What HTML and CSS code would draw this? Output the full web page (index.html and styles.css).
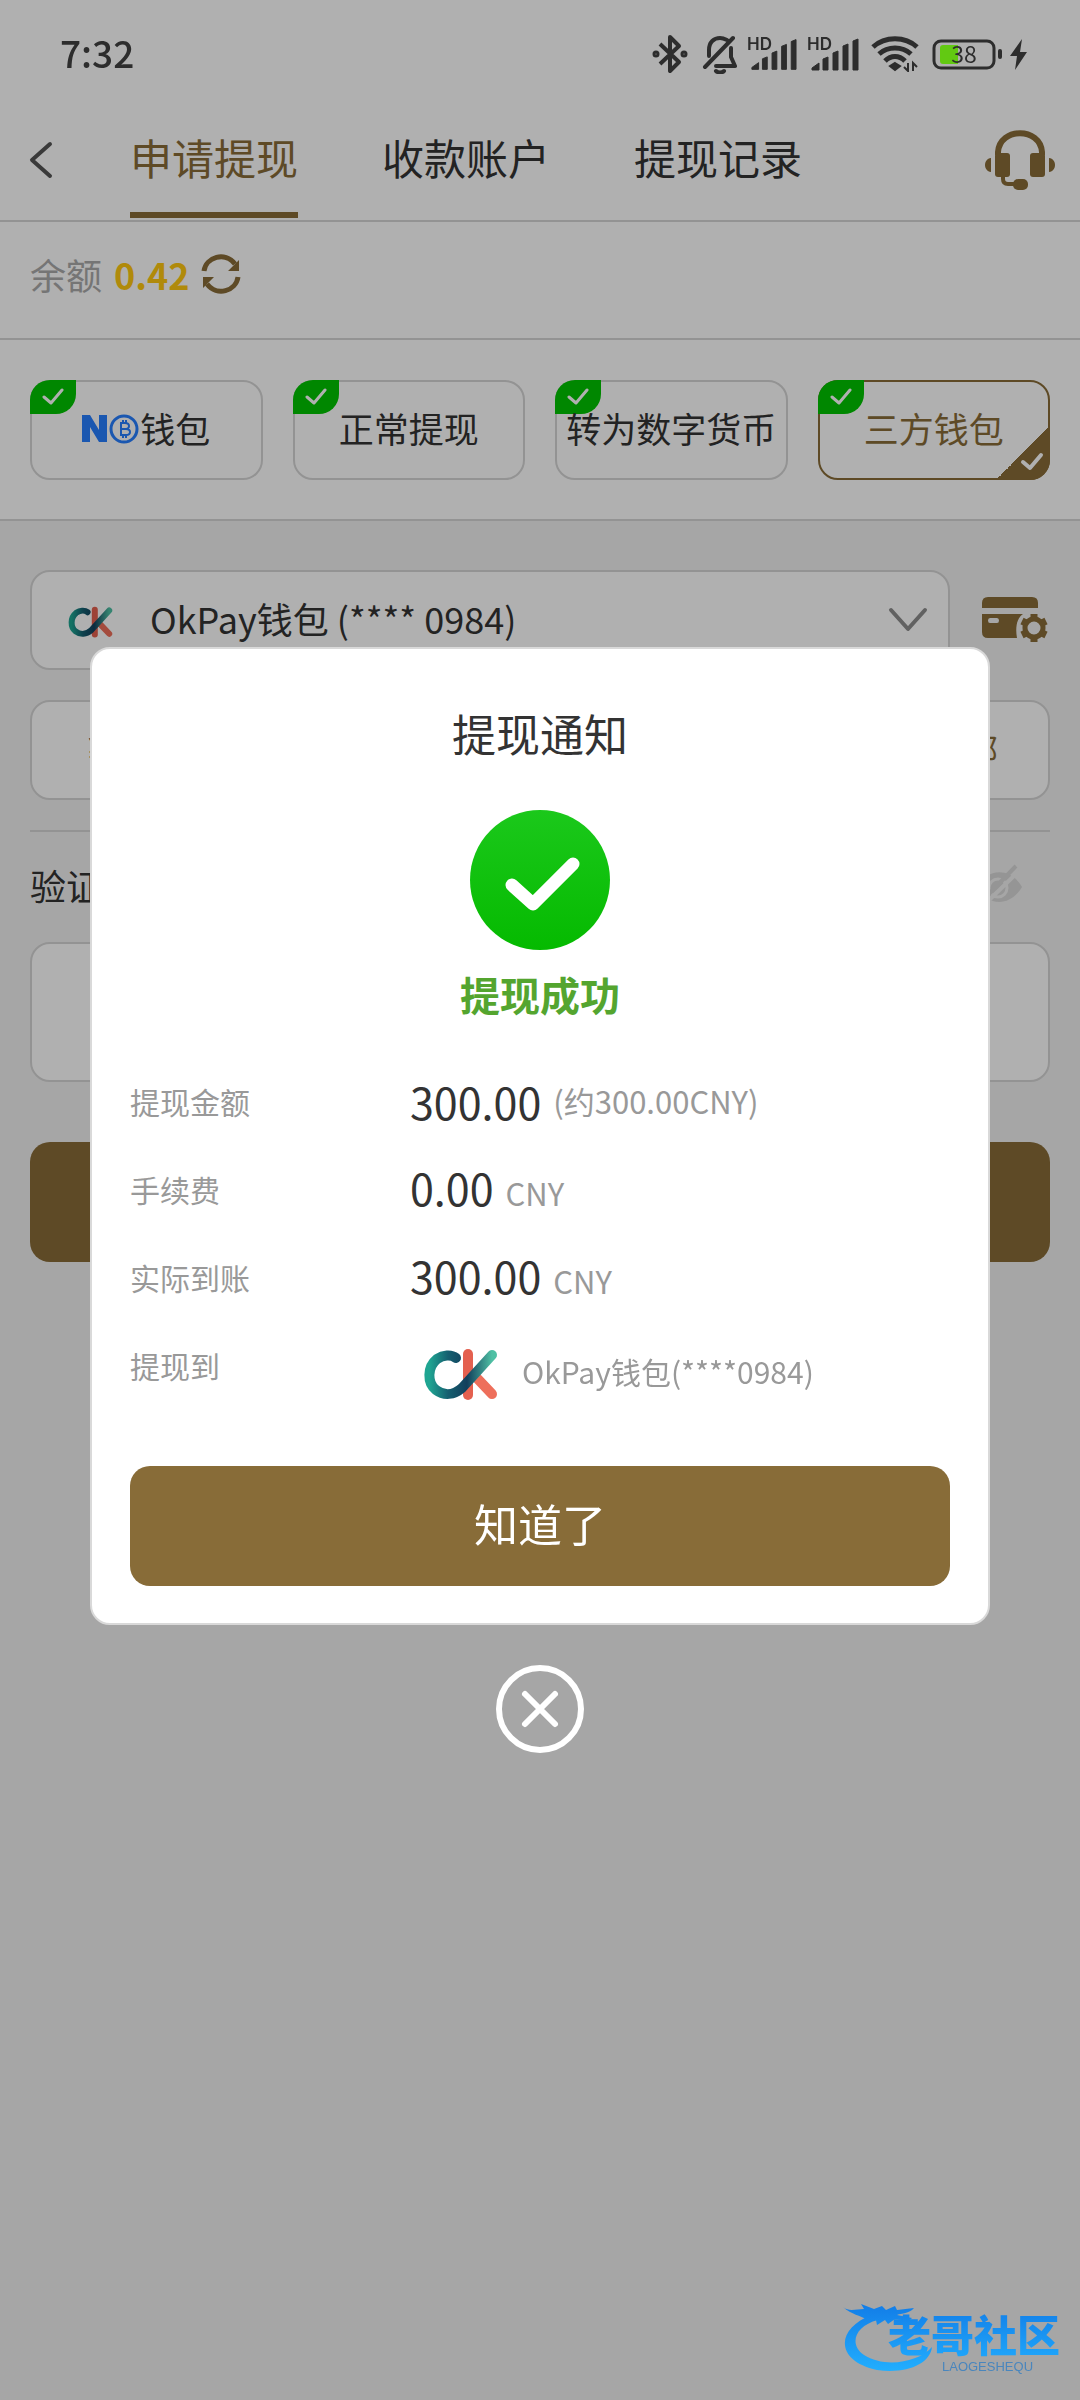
FILE: index.html
```html
<!DOCTYPE html>
<html lang="zh-CN">
<head>
<meta charset="utf-8">
<meta name="viewport" content="width=device-width, initial-scale=1">
<title>申请提现</title>
<link rel="stylesheet" href="styles.css">
</head>
<body>
<svg class="defs" aria-hidden="true">
  <defs>
    <linearGradient id="teal" x1="0" y1="0" x2="1" y2="0">
      <stop offset="0" stop-color="#1fa592"/><stop offset=".3" stop-color="#155f70"/><stop offset=".6" stop-color="#123f5c"/><stop offset="1" stop-color="#4fc0a4"/>
    </linearGradient>
    <symbol id="ck" viewBox="0 0 100 100">
      <path d="M58 33V74" stroke="#e4604f" stroke-width="10" stroke-linecap="round"/>
      <path d="M64 54L82 73" stroke="#ee6f5b" stroke-width="10" stroke-linecap="round"/>
      <path d="M46 37C41 33 33 34 27 38C17 46 17 62 26 69C34 75 44 74 52 67L82 34" fill="none" stroke="url(#teal)" stroke-width="10" stroke-linecap="round" stroke-linejoin="round"/>
    </symbol>
    <symbol id="tick" viewBox="0 0 22 18">
      <path d="M2 9L9 15L20 2" fill="none" stroke="currentColor" stroke-width="3" stroke-linecap="round" stroke-linejoin="round"/>
    </symbol>
    <symbol id="signal" viewBox="0 0 50 36">
      <path d="M3 32L10 27V34H3ZM14 23L19 21V34H14ZM24 17L29 15V34H24ZM34 10L39 8V34H34ZM44 5L49 3V34H44Z" fill="#2d2d2d" stroke="#2d2d2d" stroke-linejoin="round"/>
    </symbol>
  </defs>
</svg>

<div class="status">
  <time class="clock">7:32</time>
  <div class="status-icons">
    <svg width="36" height="40" viewBox="0 0 36 40" fill="none" stroke="#2d2d2d" stroke-width="4" stroke-linejoin="round"><path d="M8 10L27 28L18 37V3L27 12L8 30"/><circle cx="4" cy="20" r="1.500"/><circle cx="32" cy="20" r="1.500"/></svg>
    <svg width="37" height="40" viewBox="0 0 37 40" fill="none" stroke="#2d2d2d" stroke-width="4" stroke-linecap="round" stroke-linejoin="round"><path d="M9 22V16C9 8 14 4 20 4C23 4 25 5 27 6M31 14V23L35 32H16M33 4L5 33"/><path d="M16 37C18 39 22 39 24 37"/></svg>
    <span class="signal"><small>HD</small><svg width="48" height="36"><use href="#signal"/></svg></span>
    <span class="signal"><small>HD</small><svg width="50" height="36"><use href="#signal"/></svg></span>
    <svg width="48" height="36" viewBox="0 0 48 36" fill="none" stroke="#2d2d2d" stroke-width="5"><path d="M2 11C14 0 34 0 46 11M8 18C17 10 31 10 40 18M14 25C20 19 28 19 34 25"/><path d="M24 27L29 30L24 34L19 30Z" fill="#2d2d2d" stroke-width="2"/><path d="M37 27V35L33 31M42 35V27L46 31" stroke-width="2"/></svg>
    <svg width="96" height="36" viewBox="0 0 96 36"><rect x="3" y="5" width="60" height="27" rx="7" fill="none" stroke="#2d2d2d" stroke-width="3"/><path d="M9 12Q9 9 12 9H27V28H12Q9 28 9 25Z" fill="#62c912"/><rect x="67" y="13" width="4" height="10" rx="2" fill="#2d2d2d"/><text x="33" y="27" class="battery-text">38</text><path d="M91 3L79 20H86L84 34L96 16H89Z" fill="#2d2d2d"/></svg>
  </div>
</div>

<header class="header">
  <button class="back" aria-label="返回"><svg width="26" height="40" viewBox="0 0 26 40"><path d="M22 4L4 20L22 36" fill="none" stroke="#555" stroke-width="4" stroke-linecap="round" stroke-linejoin="round"/></svg></button>
  <nav class="tabs">
    <a href="#apply" class="tab active">申请提现</a>
    <a href="#accounts" class="tab">收款账户</a>
    <a href="#records" class="tab">提现记录</a>
  </nav>
  <button class="service" aria-label="客服"><svg width="70" height="60" viewBox="0 0 70 60" fill="#886c38"><path d="M13 25V22C15 -3 55 -3 57 22V25" fill="none" stroke="#886c38" stroke-width="6"/><rect x="10" y="23" width="15" height="24" rx="3"/><rect x="45" y="23" width="15" height="24" rx="3"/><path d="M6 28V42C-2 41 -2 29 6 28ZM64 28V42C72 41 72 29 64 28Z"/><path d="M18 46V49Q18 54 23 54H32" fill="none" stroke="#886c38" stroke-width="4"/><rect x="28" y="49" width="15" height="11" rx="5"/></svg></button>
</header>

<main>
  <section class="balance">
    <span>余额</span><strong>0.42</strong>
    <button aria-label="刷新"><svg width="40" height="40" viewBox="0 0 40 40"><path d="M3 17C5 3 24 -3 34 10M37 23C35 37 16 43 6 30" fill="none" stroke="#886c38" stroke-width="5"/><path d="M38 6V17H27ZM2 34V23H13Z" fill="#886c38"/></svg></button>
  </section>

  <section class="methods">
    <button class="method"><i class="badge"><svg width="22" height="18"><use href="#tick"/></svg></i>
      <svg class="no-logo" width="58" height="30" viewBox="0 0 58 30"><path d="M0 28V1H8L17 16V1H25V28H17L8 13V28Z" fill="#277eff"/><circle cx="42" cy="15" r="13" fill="none" stroke="#277eff" stroke-width="3"/><path d="M38 9H43Q47 9 47 12T43 15H39H44Q48 15 48 18T44 21H38M39 9V21M41 6V9M44 6V9M41 21V24M44 21V24" fill="none" stroke="#277eff" stroke-width="2"/></svg>钱包</button>
    <button class="method"><i class="badge"><svg width="22" height="18"><use href="#tick"/></svg></i>正常提现</button>
    <button class="method"><i class="badge"><svg width="22" height="18"><use href="#tick"/></svg></i><span>转为数字货币</span></button>
    <button class="method selected"><i class="badge"><svg width="22" height="18"><use href="#tick"/></svg></i>三方钱包<i class="corner"><svg width="24" height="20" viewBox="0 0 24 20"><path d="M3 10L10 16L21 3" fill="none" stroke="#fff" stroke-width="4" stroke-linecap="round" stroke-linejoin="round"/></svg></i></button>
  </section>

  <form class="form">
    <div class="account-row">
      <div class="field account">
        <svg width="60" height="60"><use href="#ck"/></svg>
        <select aria-label="收款账户"><option>OkPay钱包 (**** 0984)</option></select>
        <svg width="40" height="26" viewBox="0 0 40 26"><path d="M3 3L20 22L37 3" fill="none" stroke="#8d8d8d" stroke-width="4" stroke-linecap="round" stroke-linejoin="round"/></svg>
      </div>
      <button type="button" class="manage" aria-label="管理账户"><svg width="66" height="48" viewBox="0 0 66 48" fill="#886c38"><path d="M0 12V7Q0 1 6 1H50Q56 1 56 7V12Z"/><path fill-rule="evenodd" d="M0 18H41C35 22 33 31 35 42H6Q0 42 0 36ZM8 22Q6 22 6 24.500T8 27H15Q17 27 17 24.500T15 22Z"/><circle cx="52" cy="32" r="9" fill="none" stroke="#886c38" stroke-width="5"/><path d="M52 18V23M52 41V46M40 25L44 27M60 37L64 39M40 39L44 37M60 27L64 25" stroke="#886c38" stroke-width="7"/></svg></button>
    </div>
    <div class="field amount"><label for="amount">¥</label><input id="amount" type="text" inputmode="decimal"><button type="button">全部</button></div>
    <hr>
    <div class="pin-head"><label for="pin">验证</label>
      <button type="button" aria-label="显示密码"><svg width="46" height="42" viewBox="0 0 46 42"><path d="M1 23C10 5 34 2 46 23C34 43 12 43 1 23Z" fill="#d8d8d8"/><circle cx="22" cy="24" r="9" fill="none" stroke="#f1f1f1" stroke-width="3"/><path d="M43 7L9 40" stroke="#f1f1f1" stroke-width="4"/><path d="M40 2L7 36" stroke="#d8d8d8" stroke-width="4"/></svg></button></div>
    <input class="field pin" id="pin" type="password">
    <button type="button" class="primary submit" aria-label="提交"></button>
  </form>
</main>

<div class="overlay">
  <div class="dialog" role="dialog" aria-modal="true" aria-labelledby="dialog-title">
    <h1 id="dialog-title">提现通知</h1>
    <svg class="success" width="140" height="140" viewBox="0 0 140 140"><defs><linearGradient id="ok" x1="0" y1="0" x2="0" y2="1"><stop offset="0" stop-color="#1bc81b"/><stop offset="1" stop-color="#05ba00"/></linearGradient></defs><circle cx="70" cy="70" r="70" fill="url(#ok)"/><path d="M42 75L63 94L103 54" fill="none" stroke="#fff" stroke-width="13" stroke-linecap="round" stroke-linejoin="round"/></svg>
    <p class="result">提现成功</p>
    <dl class="details">
      <dt>提现金额</dt><dd class="centred"><b>300.00</b><span class="unit">(约300.00CNY)</span></dd>
      <dt>手续费</dt><dd><b>0.00</b><span class="unit">CNY</span></dd>
      <dt>实际到账</dt><dd><b>300.00</b><span class="unit">CNY</span></dd>
      <dt>提现到</dt><dd class="centred"><svg width="100" height="100"><use href="#ck"/></svg><span>OkPay钱包(****0984)</span></dd>
    </dl>
    <button class="primary">知道了</button>
  </div>
  <button class="close" aria-label="关闭"><svg width="88" height="88" viewBox="0 0 88 88" fill="none" stroke="#fff"><circle cx="44" cy="44" r="41" stroke-width="6"/><path d="M29 29L59 59M59 29L29 59" stroke-width="6" stroke-linecap="round"/></svg></button>
</div>

<svg class="watermark" width="224" height="72" viewBox="0 0 224 72" role="img" aria-label="老哥社区">
  <defs><linearGradient id="blue" gradientUnits="userSpaceOnUse" x1="0" y1="4" x2="0" y2="70"><stop offset="0" stop-color="#137fe8"/><stop offset="1" stop-color="#22b0ff"/></linearGradient></defs>
  <path d="M30 12C-6 25 -8 58 35 67C65 71 88 61 90 44C76 60 42 65 22 52C7 42 12 23 36 17Z" fill="url(#blue)"/>
  <path d="M1 4C7 9 14 6 22 6L19 1L32 6L40 3L44 7L53 3L55 7L72 5C67 11 60 10 55 12L70 15C66 20 58 16 53 16L46 21L43 17L35 22L34 17L25 17C18 12 10 12 1 4Z" fill="url(#blue)"/>
  <text x="46" y="49" class="mark-name" fill="url(#blue)">老哥社区</text>
  <text x="100" y="68" class="mark-latin" fill="#4a86bd">LAOGESHEQU</text>
</svg>
</body>
</html>
```
FILE: styles.css
```css
* { box-sizing: border-box; }
body {
  margin: 0;
  min-height: 100vh;
  background: #f1f1f1;
  color: #333;
  font-family: "Noto Sans CJK SC", "Noto Sans", sans-serif;
  font-size: 36px;
}
button, input, select { font: inherit; color: inherit; }
button { padding: 0; border: 0; background: none; }
svg { display: block; flex: none; }
a { color: inherit; text-decoration: none; }
i { font-style: normal; }
.defs { position: absolute; width: 0; height: 0; }

.status {
  display: flex;
  align-items: center;
  justify-content: space-between;
  height: 108px;
  padding: 0 53px 0 60px;
  background: #fff;
}
/* system bar stays above the dimming layer */
.clock, .status-icons { position: relative; z-index: 3; }
.clock { padding-bottom: 4px; font-size: 37px; font-weight: 500; line-height: 48px; color: #2d2d2d; }
.status-icons { display: flex; align-items: center; gap: 12px; }
.signal { position: relative; }
.signal small {
  position: absolute;
  left: -2px;
  top: -2px;
  font: 600 17px/20px Inter, sans-serif;
  color: #2d2d2d;
}
.battery-text { font: 23px "Noto Sans CJK SC", sans-serif; fill: #2d2d2d; text-anchor: middle; }

.header {
  display: flex;
  align-items: center;
  height: 114px;
  padding: 0 25px 8px 28px;
  border-bottom: 2px solid #d5d5d5;
  background: #fff;
}
.back { width: 102px; }
.tabs { display: flex; flex: 1; gap: 84px; align-self: flex-start; }
.tab {
  height: 110px;
  border-bottom: 6px solid transparent;
  font-size: 42px;
  line-height: 98px;
}
.tab.active { color: #886c38; border-color: #886c38; }

.balance {
  display: flex;
  align-items: center;
  gap: 12px;
  height: 118px;
  padding: 0 30px 12px;
  border-bottom: 2px solid #d5d5d5;
  background: #fff;
  color: #aaa;
}
.balance strong { font-size: 36px; color: #ffc80f; }

.methods {
  display: grid;
  grid-template-columns: repeat(4, 1fr);
  gap: 30px;
  padding: 40px 30px 39px;
  border-bottom: 2px solid #d5d5d5;
  background: #fff;
}
.method {
  position: relative;
  display: flex;
  align-items: center;
  justify-content: center;
  height: 100px;
  padding-bottom: 6px;
  border: 2px solid #d5d5d5;
  border-radius: 20px;
  font-size: 35px;
  white-space: nowrap;
}
.method.selected { border-color: #886c38; color: #886c38; }
.method span { position: relative; }
.no-logo { margin-top: 4px; }
.badge {
  position: absolute;
  left: -2px;
  top: -2px;
  display: grid;
  place-items: center;
  width: 46px;
  height: 34px;
  border-radius: 20px 0;
  background: #00c400;
  color: #fff;
}
.corner {
  position: absolute;
  right: -2px;
  bottom: -2px;
  width: 54px;
  height: 54px;
  padding: 26px 0 0 24px;
  border-bottom-right-radius: 20px;
  background: linear-gradient(135deg, transparent 50%, #886c38 50%);
}

.form { padding: 49px 30px; }
.field { border: 2px solid #d5d5d5; border-radius: 20px; background: #fff; }
.account-row { display: flex; align-items: center; }
.account {
  display: flex;
  flex: 1;
  align-items: center;
  gap: 30px;
  height: 100px;
  padding: 0 20px 0 28px;
}
.account select {
  flex: 1;
  min-width: 0;
  padding: 0 0 4px;
  border: 0;
  appearance: none;
  background: none;
}
.manage { width: 100px; padding-left: 32px; }
.amount {
  display: flex;
  align-items: center;
  height: 100px;
  margin-top: 30px;
  padding: 0 50px 4px 56px;
}
.amount input { flex: 1; min-width: 0; border: 0; background: none; }
.amount button { font-size: 32px; color: #886c38; }
hr { height: 2px; margin: 30px 0 0; border: 0; background: #d5d5d5; }
.pin-head {
  display: flex;
  align-items: center;
  justify-content: space-between;
  height: 110px;
  padding: 0 28px 4px 0;
}
.pin { display: block; width: 100%; height: 140px; padding: 0 28px; }
.primary {
  display: block;
  width: 100%;
  height: 120px;
  padding-bottom: 6px;
  border-radius: 20px;
  background: #886c38;
  color: #fff;
  font-size: 44px;
}
.submit { margin-top: 60px; }

.overlay {
  position: fixed;
  inset: 0;
  z-index: 2;
  display: flex;
  flex-direction: column;
  align-items: center;
  justify-content: center;
  gap: 40px;
  padding: 0 90px;
  background: rgba(0, 0, 0, 0.31);
}
.dialog {
  width: 100%;
  padding: 54px 38px 37px;
  border: 2px solid #d9d9d9;
  border-radius: 20px;
  background: #fff;
}
.dialog h1 { margin: 0; font-size: 44px; font-weight: 400; line-height: 60px; text-align: center; }
.success { margin: 47px auto 18px; }
.result { margin: 0; font-size: 40px; font-weight: 700; line-height: 52px; text-align: center; color: #54a52f; }
.details {
  display: grid;
  grid-template-columns: 280px 1fr;
  grid-template-rows: repeat(3, 88px) 100px;
  margin: 37px 0 45px;
  font-size: 30px;
  line-height: 88px;
  color: #999;
}
.details dd { display: flex; align-items: baseline; gap: 12px; margin: 0; }
.details .centred { align-items: center; }
.details b { font-size: 43px; font-weight: 400; line-height: 84px; color: #333; }
.details .unit { font-size: 31px; }
.watermark { position: fixed; right: 14px; bottom: 25px; z-index: 3; }
.mark-name { font: 900 43px "Noto Sans CJK SC", sans-serif; }
.mark-latin { font: 13px "Liberation Sans", sans-serif; }
```
